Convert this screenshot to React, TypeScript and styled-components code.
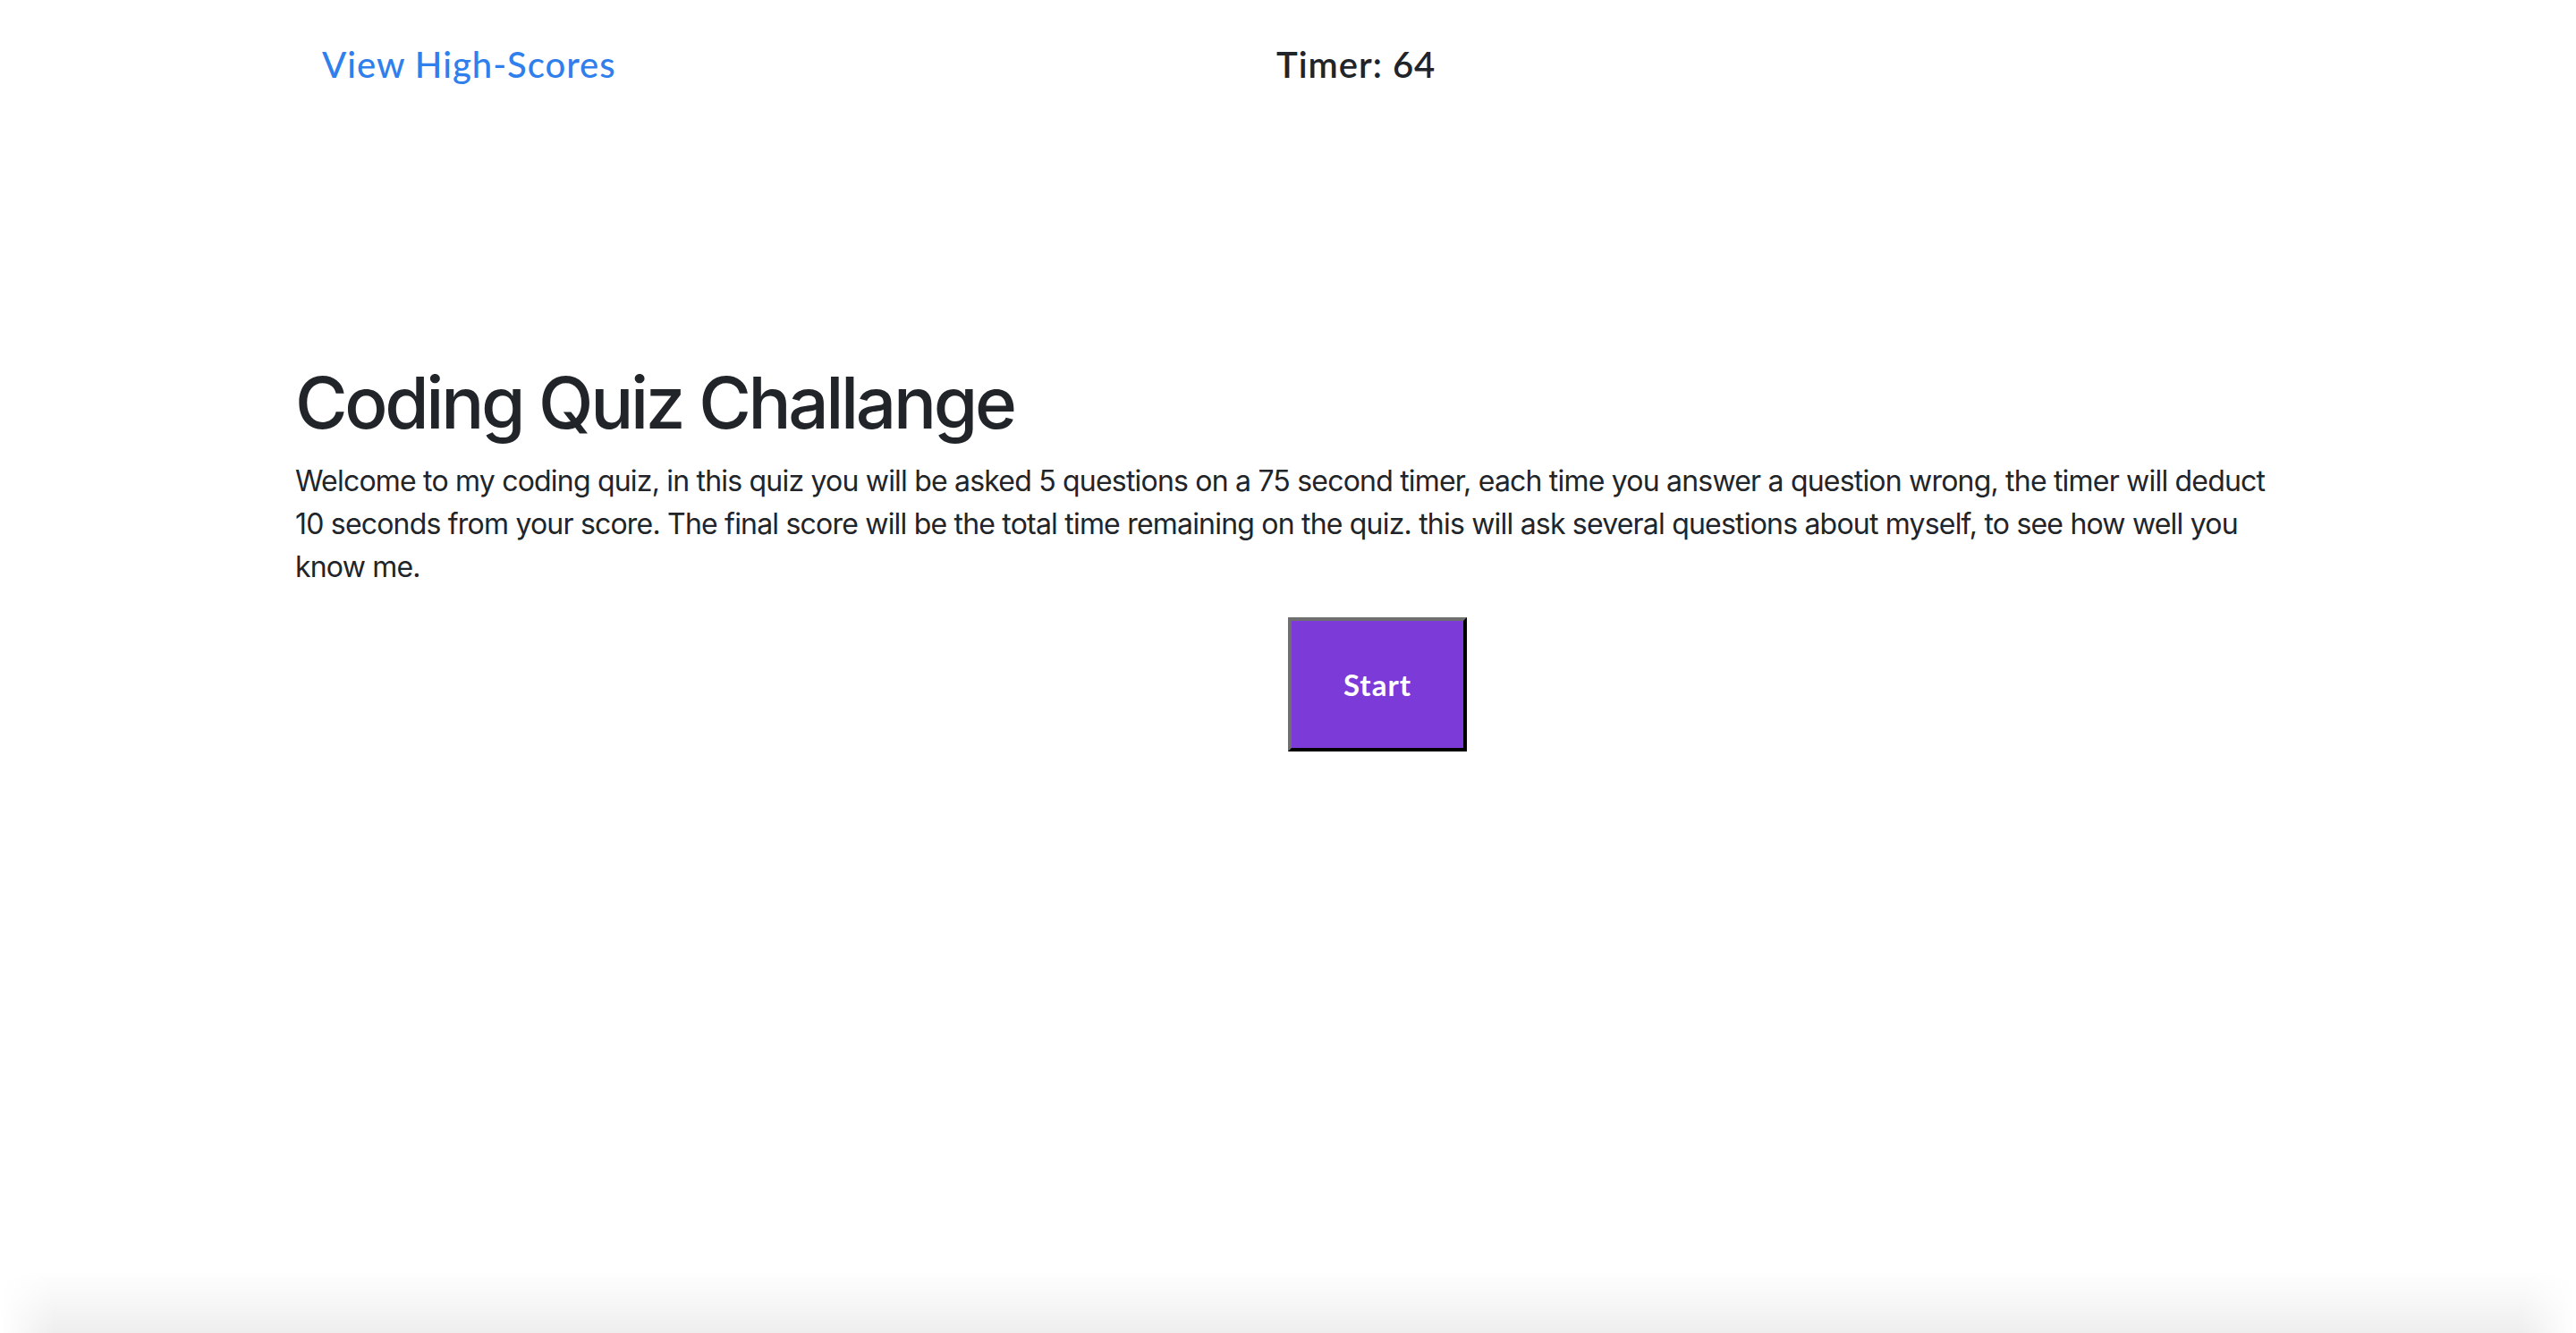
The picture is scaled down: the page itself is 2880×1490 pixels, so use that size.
import React from "react";
import styled, { createGlobalStyle } from "styled-components";

const GlobalStyle = createGlobalStyle`
  html, body {
    margin: 0;
    padding: 0;
    background: #ffffff;
  }
  body {
    font-family: Inter, "Liberation Sans", Arial, sans-serif;
    color: #212529;
  }
  * { box-sizing: border-box; }
`;

const Page = styled.div`
  min-height: 1490px;
  display: flex;
  flex-direction: column;
`;

const Header = styled.header`
  display: flex;
  align-items: center;
  height: 144px;
  padding-left: 360px;
  font-family: Lato, "Open Sans", sans-serif;
  font-size: 40px;
  font-weight: 500;
  letter-spacing: 1px;
`;

const NavSlot = styled.div`
  width: 1067px;
`;

const HighScoreLink = styled.a`
  color: #2f80ed;
  text-decoration: none;
  cursor: pointer;
`;

const Timer = styled.div`
  color: #212529;
  font-weight: 600;
`;

const Main = styled.main`
  flex: 1;
  width: 2280px;
  margin: 0 auto;
  padding: 258px 30px 0;
`;

const Title = styled.h1`
  margin: 0 0 16px;
  font-size: 80px;
  font-weight: 500;
  line-height: 1.2;
  letter-spacing: -0.042em;
  color: #212529;
`;

const Intro = styled.p`
  margin: 0 0 32px;
  font-size: 32px;
  line-height: 48px;
  letter-spacing: -0.025em;
  color: #212529;
`;

const ButtonRow = styled.div`
  display: flex;
  padding-left: 50%;
`;

const StartButton = styled.button`
  width: 200px;
  height: 150px;
  background: #7c3ad9;
  color: #ffffff;
  border: 4px outset #767676;
  border-color: #6f6f6f #1f1f1f #1f1f1f #6f6f6f;
  font-family: Lato, "Open Sans", sans-serif;
  font-weight: 700;
  font-size: 33px;
  letter-spacing: 1px;
  cursor: pointer;
  padding: 0;
`;

const BottomShade = styled.div`
  height: 70px;
  background: linear-gradient(to bottom, rgba(0, 0, 0, 0), rgba(0, 0, 0, 0.065));
  -webkit-mask-image: linear-gradient(to right, transparent 0, #000 60px, #000 calc(100% - 60px), transparent 100%);
  mask-image: linear-gradient(to right, transparent 0, #000 60px, #000 calc(100% - 60px), transparent 100%);
`;

export default function App() {
  return (
    <>
      <GlobalStyle />
      <Page>
        <Header>
          <NavSlot>
            <HighScoreLink>View High-Scores</HighScoreLink>
          </NavSlot>
          <Timer>Timer: 64</Timer>
        </Header>
        <Main>
          <Title>Coding Quiz Challange</Title>
          <Intro>
            Welcome to my coding quiz, in this quiz you will be asked 5 questions on a 75 second timer, each time you
            answer a question wrong, the timer will deduct 10 seconds from your score. The final score will be the
            total time remaining on the quiz. this will ask several questions about myself, to see how well you know
            me.
          </Intro>
          <ButtonRow>
            <StartButton>Start</StartButton>
          </ButtonRow>
        </Main>
        <BottomShade />
      </Page>
    </>
  );
}
